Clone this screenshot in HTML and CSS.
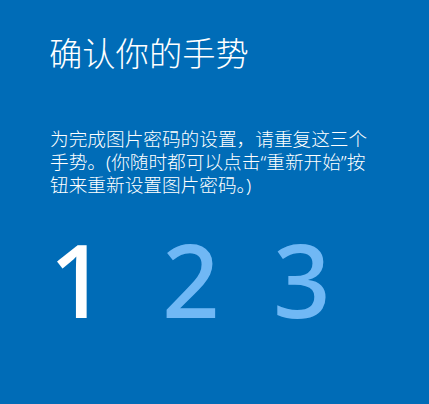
FILE: index.html
```html
<!DOCTYPE html>
<html lang="zh-CN">
<head>
<meta charset="utf-8">
<link rel="stylesheet" href="styles.css">
</head>
<body>
<main class="panel">
  <h1 class="title">确认你的手势</h1>
  <p class="desc">为完成图片密码的设置，请重复这三个手势。(你随时都可以点击“重新开始”按钮来重新设置图片密码。)</p>
  <div class="steps">
    <span class="step current">1</span>
    <span class="step">2</span>
    <span class="step">3</span>
  </div>
</main>
</body>
</html>
```
FILE: styles.css
```css
html, body {
  margin: 0;
  padding: 0;
  background: #006cb7;
}
.panel {
  width: 429px;
  height: 404px;
  box-sizing: border-box;
  padding: 30px 0 0 49px;
  color: #ffffff;
  font-family: "Noto Sans", "Noto Sans CJK SC", sans-serif;
}
.title {
  margin: 0;
  font-size: 33.3px;
  font-weight: 300;
  line-height: 46px;
}
.desc {
  margin: 51px 0 0 1px;
  width: 322px;
  font-size: 18.67px;
  font-weight: 300;
  line-height: 23px;
}
.steps {
  display: flex;
  margin-top: 23px;
  font-family: "Noto Sans", sans-serif;
  font-size: 101px;
  font-weight: 500;
  line-height: 120px;
}
.step {
  width: 111px;
  color: #70b8f5;
}
.step.current {
  width: 113px;
  color: #ffffff;
}
```
